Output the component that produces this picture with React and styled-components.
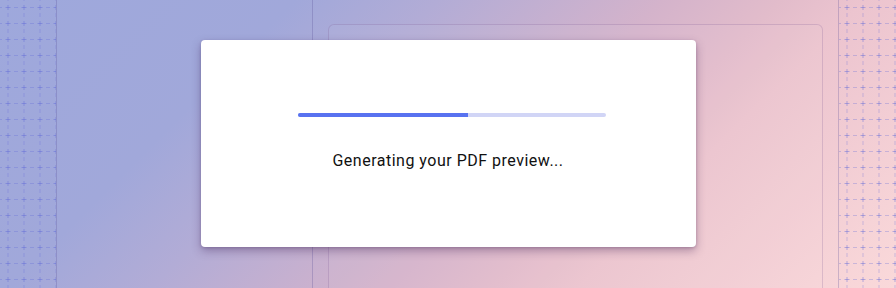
import React from "react";
import styled, { createGlobalStyle } from "styled-components";

const Global = createGlobalStyle`
  html, body { margin: 0; padding: 0; }
  body { font-family: Roboto, "Liberation Sans", sans-serif; }
  #root { width: 896px; height: 288px; }
`;

const Page = styled.div`
  position: relative;
  display: flex;
  width: 896px;
  height: 288px;
  overflow: hidden;
  background: linear-gradient(
    135deg,
    #9ea8dc 0%,
    #a1a8da 25%,
    #b2acd6 37%,
    #d4b3cb 56%,
    #e2bccb 66%,
    #ecc4cf 73%,
    #fad9da 100%
  );
`;

const Rail = styled.div`
  flex: 0 0 ${(p) => p.$w}px;
  height: 100%;
  box-sizing: border-box;
  ${(p) => (p.$side === "left" ? "border-right" : "border-left")}: 1px solid rgba(90, 80, 150, 0.28);
  overflow: hidden;
  svg { display: block; }
`;

const Sidebar = styled.div`
  flex: 0 0 256px;
  height: 100%;
  box-sizing: border-box;
  border-right: 1px solid rgba(90, 80, 150, 0.28);
`;

const Main = styled.div`
  flex: 1;
  height: 100%;
  box-sizing: border-box;
  padding: 24px 15px 0 15px;
  display: flex;
`;

const Panel = styled.div`
  flex: 1;
  height: 300px;
  border: 1px solid rgba(120, 80, 140, 0.22);
  border-radius: 6px;
  background: rgba(255, 255, 255, 0.04);
`;

const Overlay = styled.div`
  position: absolute;
  inset: 0;
  display: flex;
  align-items: center;
  justify-content: center;
  padding-bottom: 1px;
`;

const Modal = styled.div`
  width: 495px;
  height: 207px;
  box-sizing: border-box;
  background: #fff;
  border-radius: 4px;
  box-shadow: 0 4px 10px rgba(60, 30, 80, 0.35), 0 1px 3px rgba(60, 30, 80, 0.2);
  display: flex;
  flex-direction: column;
  align-items: flex-start;
  padding: 73px 0 0 97px;
`;

const Track = styled.div`
  width: 308px;
  height: 4px;
  background: #d1d5f6;
  border-radius: 2px;
  overflow: hidden;
  display: flex;
`;

const Fill = styled.div`
  height: 100%;
  background: #5872f0;
`;

const Message = styled.div`
  margin-top: 32px;
  align-self: stretch;
  margin-left: -97px;
  text-align: center;
  font-family: Roboto, "Liberation Sans", sans-serif;
  font-size: 16px;
  letter-spacing: 0.5px;
  line-height: 24px;
  color: #111;
`;

function GridPattern({ id, w }) {
  return (
    <svg width={w} height="288">
      <defs>
        <pattern id={id} x="0" y="0" width="16" height="16" patternUnits="userSpaceOnUse">
          <path d="M5.5 7.5h5M8 5v5" stroke="rgba(95,105,215,0.45)" strokeWidth="1" />
          <path d="M14 7.5h4M-2 7.5h4" stroke="rgba(95,105,215,0.3)" strokeWidth="1" />
          <path d="M8 13v4M8 -3v4" stroke="rgba(95,105,215,0.3)" strokeWidth="1" />
        </pattern>
      </defs>
      <rect width="100%" height="100%" fill={`url(#${id})`} />
    </svg>
  );
}

export default function App() {
  const progress = 0.555;
  return (
    <>
      <Global />
      <Page>
        <Rail $w={57} $side="left">
          <GridPattern id="gl" w={56} />
        </Rail>
        <Sidebar />
        <Main>
          <Panel />
        </Main>
        <Rail $w={58} $side="right">
          <GridPattern id="gr" w={58} />
        </Rail>
        <Overlay>
          <Modal>
            <Track>
              <Fill style={{ width: `${progress * 100}%` }} />
            </Track>
            <Message>Generating your PDF preview...</Message>
          </Modal>
        </Overlay>
      </Page>
    </>
  );
}
